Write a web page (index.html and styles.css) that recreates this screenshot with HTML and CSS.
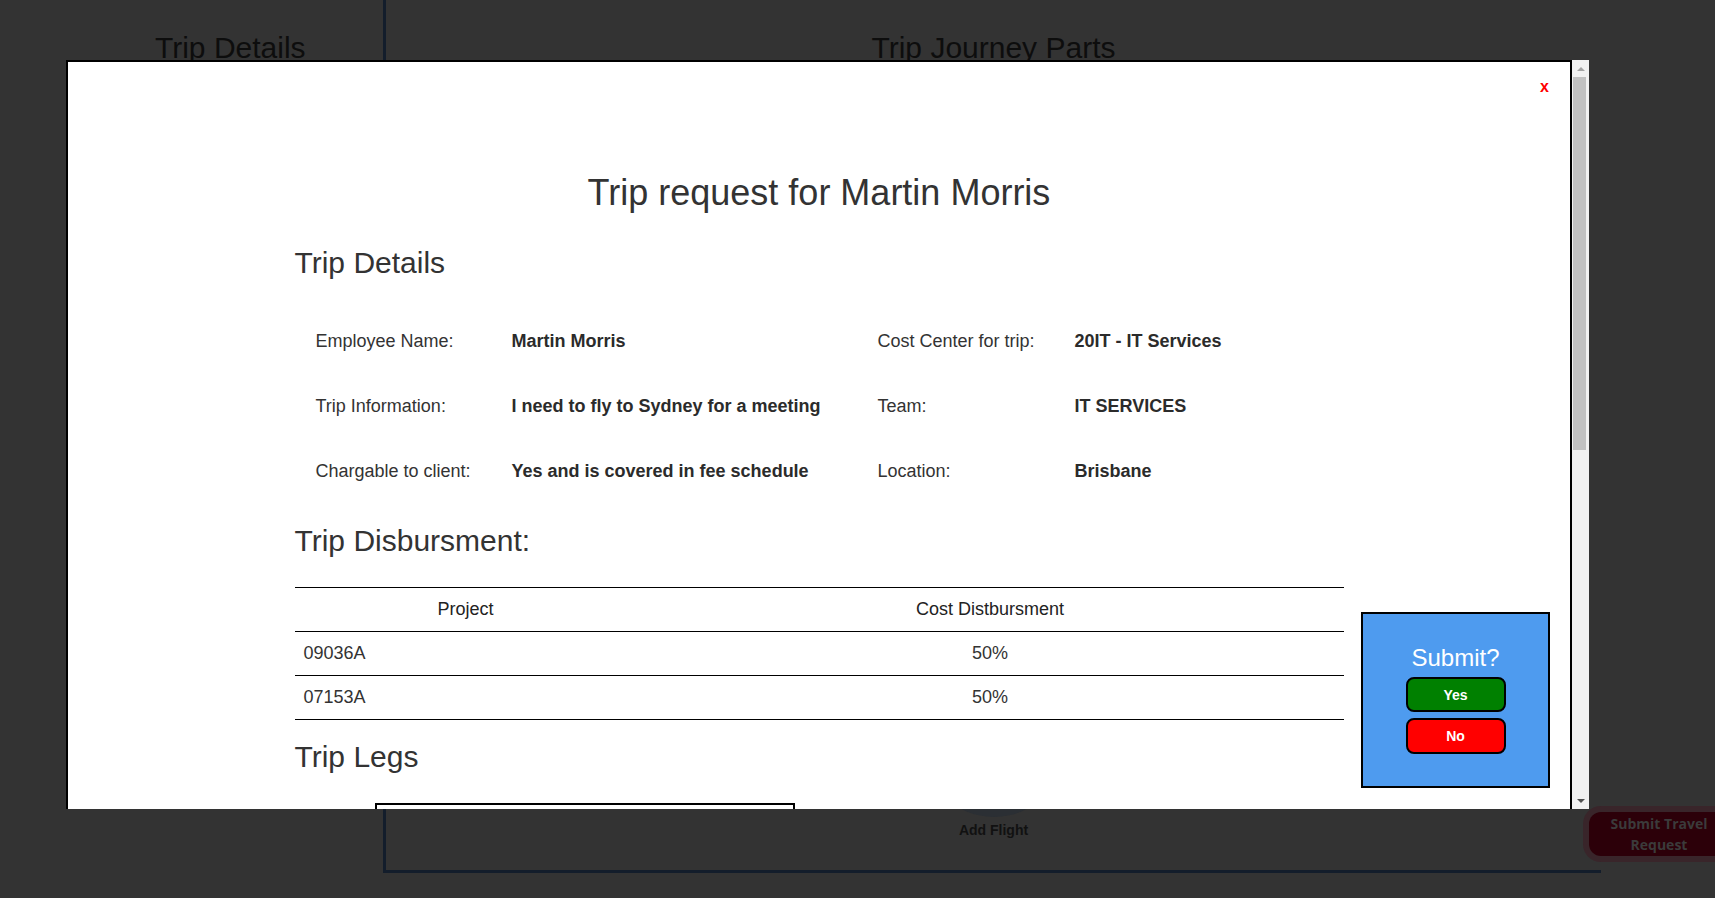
FILE: index.html
```html
<!DOCTYPE html>
<html lang="en">
<head>
<meta charset="utf-8">
<title>Trip request</title>
<link rel="stylesheet" href="styles.css">
</head>
<body>
<div class="page">
  <aside class="side">
    <h2 class="bg-title side-title">Trip Details</h2>
  </aside>
  <section class="journey">
    <h2 class="bg-title">Trip Journey Parts</h2>
    <div class="add-flight">
      <span class="add-circle"></span>
      <span class="add-label">Add Flight</span>
    </div>
  </section>
</div>
<button class="submit-travel">Submit Travel<br>Request</button>

<div class="modal-shell">
  <div class="modal-viewport">
    <div class="modal">
      <button class="close">x</button>
      <div class="content">
        <h1 class="title">Trip request for Martin Morris</h1>

        <h2 class="section">Trip Details</h2>
        <div class="details">
          <span class="lbl">Employee Name:</span>
          <span class="val">Martin Morris</span>
          <span class="lbl">Cost Center for trip:</span>
          <span class="val">20IT - IT Services</span>

          <span class="lbl">Trip Information:</span>
          <span class="val">I need to fly to Sydney for a meeting</span>
          <span class="lbl">Team:</span>
          <span class="val">IT SERVICES</span>

          <span class="lbl">Chargable to client:</span>
          <span class="val">Yes and is covered in fee schedule</span>
          <span class="lbl">Location:</span>
          <span class="val">Brisbane</span>
        </div>

        <h2 class="section sec-disb">Trip Disbursment:</h2>
        <table class="disb">
          <thead>
            <tr><th class="c1">Project</th><th>Cost Distbursment</th></tr>
          </thead>
          <tbody>
            <tr><td class="c1">09036A</td><td class="pct">50%</td></tr>
            <tr><td class="c1">07153A</td><td class="pct">50%</td></tr>
          </tbody>
        </table>

        <h2 class="section sec-legs">Trip Legs</h2>
        <div class="leg-card"></div>
      </div>
    </div>
  </div>
  <div class="scrollbar" aria-hidden="true">
    <span class="sb-btn sb-up"></span>
    <span class="sb-thumb"></span>
    <span class="sb-btn sb-down"></span>
  </div>
</div>

<div class="submit-panel">
  <div class="submit-q">Submit?</div>
  <button class="btn yes">Yes</button>
  <button class="btn no">No</button>
</div>
</body>
</html>
```

FILE: styles.css
```css
* { box-sizing: border-box; }

html, body {
  margin: 0;
  padding: 0;
  height: 100%;
  overflow: hidden;
}

body {
  background: #333333;
  font-family: "Liberation Sans", Arial, sans-serif;
  color: #333;
}

/* ---------- background page (under overlay) ---------- */
.page {
  display: flex;
  height: 873px;
}

.side {
  width: 383px;
  flex: none;
  padding-left: 155px;
}

.bg-title {
  margin: 0;
  padding-top: 31px;
  font-size: 30px;
  line-height: 33px;
  font-weight: normal;
  color: #0d0d0d;
}

.journey {
  width: 1218px;
  flex: none;
  border-left: 3px solid #131d2b;
  border-bottom: 3px solid #131d2b;
  display: flex;
  flex-direction: column;
  align-items: center;
  padding-bottom: 32px;
}

.add-flight {
  margin-top: auto;
  display: flex;
  flex-direction: column;
  align-items: center;
  gap: 5px;
}

.add-circle {
  width: 144px;
  height: 144px;
  border-radius: 50%;
  background: #2b2f34;
}

.add-label {
  font-weight: bold;
  font-size: 14px;
  line-height: 16px;
  color: #111;
}

.submit-travel {
  position: absolute;
  left: 1589px;
  top: 812px;
  width: 140px;
  height: 44px;
  border: none;
  border-radius: 12px;
  background: #2c0009;
  box-shadow: 0 0 0 6px #39252a;
  color: #3b3b3b;
  font-family: "Open Sans", "Liberation Sans", sans-serif;
  font-weight: bold;
  font-size: 14px;
  line-height: 21px;
  padding: 0;
  text-align: center;
}

/* ---------- modal ---------- */
.modal-shell {
  position: fixed;
  left: 66px;
  top: 60px;
  width: 1523px;
  height: 749px;
  display: flex;
  background: #fff;
}

.modal-viewport {
  flex: 1;
  min-width: 0;
  overflow: hidden;
}

.scrollbar {
  width: 17px;
  flex: none;
  background: #f1f1f1;
  display: flex;
  flex-direction: column;
}

.sb-btn {
  height: 17px;
  flex: none;
  display: flex;
  align-items: center;
  justify-content: center;
}

.sb-btn::before {
  content: "";
  width: 0;
  height: 0;
  border-left: 4px solid transparent;
  border-right: 4px solid transparent;
}

.sb-up::before { border-bottom: 4px solid #a3a3a3; }
.sb-down { margin-top: auto; }
.sb-down::before { border-top: 4px solid #505050; }

.sb-thumb {
  height: 373px;
  margin: 0 3px 0 1px;
  background: #c1c1c1;
}

.modal {
  position: relative;
  min-height: 1436px;
  border: 2px solid #000;
  background: #fff;
}

.close {
  position: absolute;
  top: 15px;
  right: 21px;
  border: none;
  background: none;
  padding: 0;
  color: #ff0000;
  font-family: "Liberation Sans", Arial, sans-serif;
  font-weight: bold;
  font-size: 16px;
  line-height: 20px;
}

.content {
  width: 1049px;
  margin: 0 auto;
  padding-top: 111px;
}

.title {
  margin: 0;
  text-align: center;
  font-size: 36px;
  line-height: 40px;
  font-weight: normal;
  color: #333;
}

.section {
  margin: 33px 0 0;
  font-size: 30px;
  line-height: 33px;
  font-weight: normal;
  color: #333;
}

.details {
  margin-top: 29px;
  padding-left: 21px;
  display: grid;
  grid-template-columns: 196px 366px 197px 1fr;
  grid-auto-rows: 65px;
  align-items: center;
  font-size: 18px;
  line-height: 24px;
}

.lbl { color: #333; }
.val { color: #2b2b2b; font-weight: bold; }

.sec-disb { margin-top: 21px; }

.disb {
  margin-top: 30px;
  width: 100%;
  border-collapse: collapse;
  font-size: 18px;
  color: #333;
}

.disb thead tr { border-top: 1px solid #000; }

.disb th,
.disb td {
  height: 44px;
  padding: 0 9px;
  border-bottom: 1px solid #000;
  font-weight: normal;
}

.disb th { text-align: center; color: #222; }
.disb .c1 { width: 342px; }
.disb td.c1 { text-align: left; }
.disb td.pct { text-align: center; }

.sec-legs { margin-top: 20px; }

.leg-card {
  margin: 30px 0 0 80px;
  width: 420px;
  height: 260px;
  border: 2px solid #000;
}

/* ---------- floating submit panel ---------- */
.submit-panel {
  position: fixed;
  left: 1361px;
  top: 612px;
  width: 189px;
  height: 176px;
  border: 2px solid #000;
  background: #4e9bef;
  display: flex;
  flex-direction: column;
  align-items: center;
  padding-top: 30px;
}

.submit-q {
  color: #fff;
  font-size: 24px;
  line-height: 28px;
  margin-bottom: 5px;
}

.btn {
  width: 100px;
  height: 35px;
  border: 2px solid #000;
  border-radius: 8px;
  color: #fff;
  font-family: "Liberation Sans", Arial, sans-serif;
  font-weight: bold;
  font-size: 14px;
  padding: 0;
}

.btn.yes { background: #008000; margin-bottom: 6px; }
.btn.no { background: #ff0000; height: 36px; }
```
